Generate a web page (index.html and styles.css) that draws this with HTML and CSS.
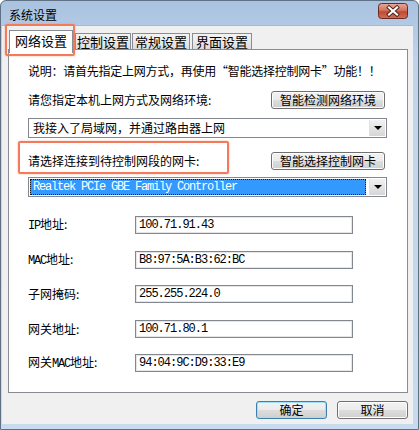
FILE: index.html
```html
<!DOCTYPE html>
<html lang="zh-CN">
<head>
  <meta charset="UTF-8">
  <title>系统设置</title>
  <link rel="stylesheet" href="styles.css">
</head>
<body>

  <div class="window">
    <div class="titlebar">
      <span class="title">系统设置</span>
      <span class="close">
        <svg width="30" height="16" viewBox="0 0 30 16">
          <defs>
            <linearGradient id="red" x1="0" y1="0" x2="0" y2="1">
              <stop offset="0" stop-color="#e8a899"/>
              <stop offset="0.45" stop-color="#d27560"/>
              <stop offset="0.55" stop-color="#c24a32"/>
              <stop offset="1" stop-color="#d0705a"/>
            </linearGradient>
          </defs>
          <rect x="0.5" y="0.5" width="29" height="15" rx="3" fill="url(#red)" stroke="#6b2a1e"/>
          <path d="M11 4.5 L19 11.5 M19 4.5 L11 11.5" stroke="#4a2018" stroke-width="4" stroke-linecap="square"/>
          <path d="M11 4.5 L19 11.5 M19 4.5 L11 11.5" stroke="#ffffff" stroke-width="2.2" stroke-linecap="square"/>
        </svg>
      </span>
    </div>

    <div class="client">
      <div class="tabs">
        <div class="tab active">网络设置</div>
        <div class="tab">控制设置</div>
        <div class="tab">常规设置</div>
        <div class="tab">界面设置</div>
      </div>

      <div class="panel">
        <p class="note">说明：请首先指定上网方式，再使用“智能选择控制网卡”功能！！</p>

        <div class="row">
          <span>请您指定本机上网方式及网络环境:</span>
          <button class="btn wide">智能检测网络环境</button>
        </div>

        <div class="combo">
          <span class="combo-text">我接入了局域网，并通过路由器上网</span>
          <span class="combo-arrow"></span>
        </div>

        <div class="row row-nic">
          <span>请选择连接到待控制网段的网卡:</span>
          <button class="btn wide">智能选择控制网卡</button>
        </div>

        <div class="combo combo-nic">
          <span class="combo-text selected">Realtek PCIe GBE Family Controller</span>
          <span class="combo-arrow"></span>
        </div>

        <div class="fields">
          <span class="label"><span class="latin">IP</span>地址:</span>
          <div class="field">100.71.91.43</div>
          <span class="label"><span class="latin">MAC</span>地址:</span>
          <div class="field">B8:97:5A:B3:62:BC</div>
          <span class="label">子网掩码:</span>
          <div class="field">255.255.224.0</div>
          <span class="label">网关地址:</span>
          <div class="field">100.71.80.1</div>
          <span class="label">网关<span class="latin">MAC</span>地址:</span>
          <div class="field">94:04:9C:D9:33:E9</div>
        </div>
      </div>

      <div class="actions">
        <button class="btn default">确定</button>
        <button class="btn">取消</button>
      </div>
    </div>

    <div class="mark mark-tab"></div>
    <div class="mark mark-nic"></div>
  </div>

</body>
</html>
```

FILE: styles.css
```css
* { margin: 0; padding: 0; box-sizing: border-box; }
body {
  background-color: #ffffff;
  font-family: "Noto Sans CJK SC", "Liberation Sans", sans-serif;
  font-size: 12px;
  color: #000000;
}
.window {
  position: relative;
  width: 419px;
  height: 430px;
  background: linear-gradient(#a9c2df, #bfd4eb 60px, #c8daee);
  border: 1px solid #5f6f84;
  border-radius: 6px 6px 0 0;
  padding: 0 5px 5px 1px;
  display: flex;
  flex-direction: column;
}
.titlebar {
  height: 24px;
  display: flex;
  align-items: center;
  justify-content: space-between;
  padding: 0 5px 0 7px;
}
.title {
  font-size: 12px;
  line-height: 14px;
  margin-top: 3px;
}
.close {
  display: flex;
  margin-top: -4px;
}
.client {
  flex: 1;
  background-color: #f0f0f0;
  border-top: 1px solid #a9b8ca;
  padding: 4px 5px 0 6px;
}
.tabs {
  display: flex;
  align-items: flex-end;
  height: 19px;
  padding-left: 1px;
  position: relative;
  z-index: 2;
}
.tab {
  height: 16px;
  line-height: 15px;
  font-size: 13px;
  text-align: center;
  border: 1px solid #898c95;
  border-bottom: none;
  background: linear-gradient(#f3f3f3, #eaeaea 50%, #dcdcdc);
  margin-left: 1px;
}
.tab:nth-child(2) { width: 56px; margin-left: 2px; }
.tab:nth-child(3) { width: 58px; }
.tab:nth-child(4) { width: 60px; margin-left: 2px; }
.tab.active {
  width: 64px;
  height: 23px;
  line-height: 20px;
  margin-left: 0;
  margin-bottom: -4px;
  background: #ffffff;
}
.panel {
  height: 344px;
  background-color: #ffffff;
  border: 1px solid #898c95;
  padding: 13px 20px 0 19px;
}
.note {
  height: 16px;
  line-height: 16px;
  white-space: nowrap;
  letter-spacing: -0.25px;
}
.row {
  display: flex;
  align-items: center;
  justify-content: space-between;
  height: 18px;
  margin-top: 12px;
  line-height: 16px;
  white-space: nowrap;
}
.row-nic {
  margin-top: 14px;
}
.btn {
  font-family: "Noto Sans CJK SC", "Liberation Sans", sans-serif;
  font-size: 12px;
  line-height: 14px;
  height: 18px;
  color: #000000;
  border: 1px solid #707070;
  border-radius: 3px;
  background: linear-gradient(#f2f2f2, #ebebeb 50%, #dddddd 51%, #cfcfcf);
  box-shadow: inset 0 0 0 1px #fcfcfc;
}
.btn.wide {
  width: 114px;
  margin-right: 2px;
}
.combo {
  display: flex;
  height: 20px;
  margin-top: 9px;
  border: 1px solid #828790;
  background-color: #ffffff;
  padding: 1px;
}
.combo-nic {
  margin-top: 7px;
}
.combo-text {
  flex: 1;
  line-height: 16px;
  padding-left: 3px;
  font-size: 12px;
  white-space: nowrap;
}
.combo-text.selected {
  background-color: #3399ff;
  color: #ffffff;
  outline: 1px dotted #1a1a1a;
  outline-offset: -1px;
  font-family: "Liberation Mono", monospace;
  font-size: 12px;
  letter-spacing: -1.2px;
  margin-right: 3px;
}
.combo-arrow {
  width: 16px;
  background: linear-gradient(#f2f2f2, #e4e4e4 50%, #d6d6d6);
  border-left: 1px solid #e0e0e0;
  display: flex;
  align-items: center;
  justify-content: center;
}
.combo-arrow::after {
  content: "";
  border-left: 4px solid transparent;
  border-right: 4px solid transparent;
  border-top: 4px solid #000000;
}
.fields {
  display: grid;
  grid-template-columns: 107px 218px;
  grid-auto-rows: 18px;
  row-gap: 16.5px;
  margin-top: 19px;
  align-items: center;
}
.label {
  font-size: 12px;
  line-height: 16px;
  white-space: nowrap;
}
.latin {
  font-family: "Liberation Mono", monospace;
  font-size: 12px;
  letter-spacing: -1.2px;
}
.field {
  height: 18px;
  border: 1px solid #828790;
  box-shadow: inset 0 0 0 1px #e6e6e6;
  background-color: #ffffff;
  font-family: "Liberation Mono", monospace;
  font-size: 12px;
  letter-spacing: -1px;
  line-height: 16px;
  padding-left: 3px;
  white-space: nowrap;
}
.actions {
  display: flex;
  justify-content: flex-end;
  gap: 10px;
  margin-top: 8px;
}
.actions .btn {
  width: 71px;
}
.btn.default {
  border-color: #3c7fb1;
  box-shadow: inset 0 0 0 1px #9fe0f8;
}
.mark {
  position: absolute;
  border: 2px solid #f47a5c;
  border-radius: 2px;
  box-shadow: 0 0 2px rgba(244, 122, 92, 0.6);
  z-index: 5;
}
.mark-tab {
  left: 4px;
  top: 23px;
  width: 70px;
  height: 32px;
}
.mark-nic {
  left: 17px;
  top: 140px;
  width: 211px;
  height: 33px;
}
```
